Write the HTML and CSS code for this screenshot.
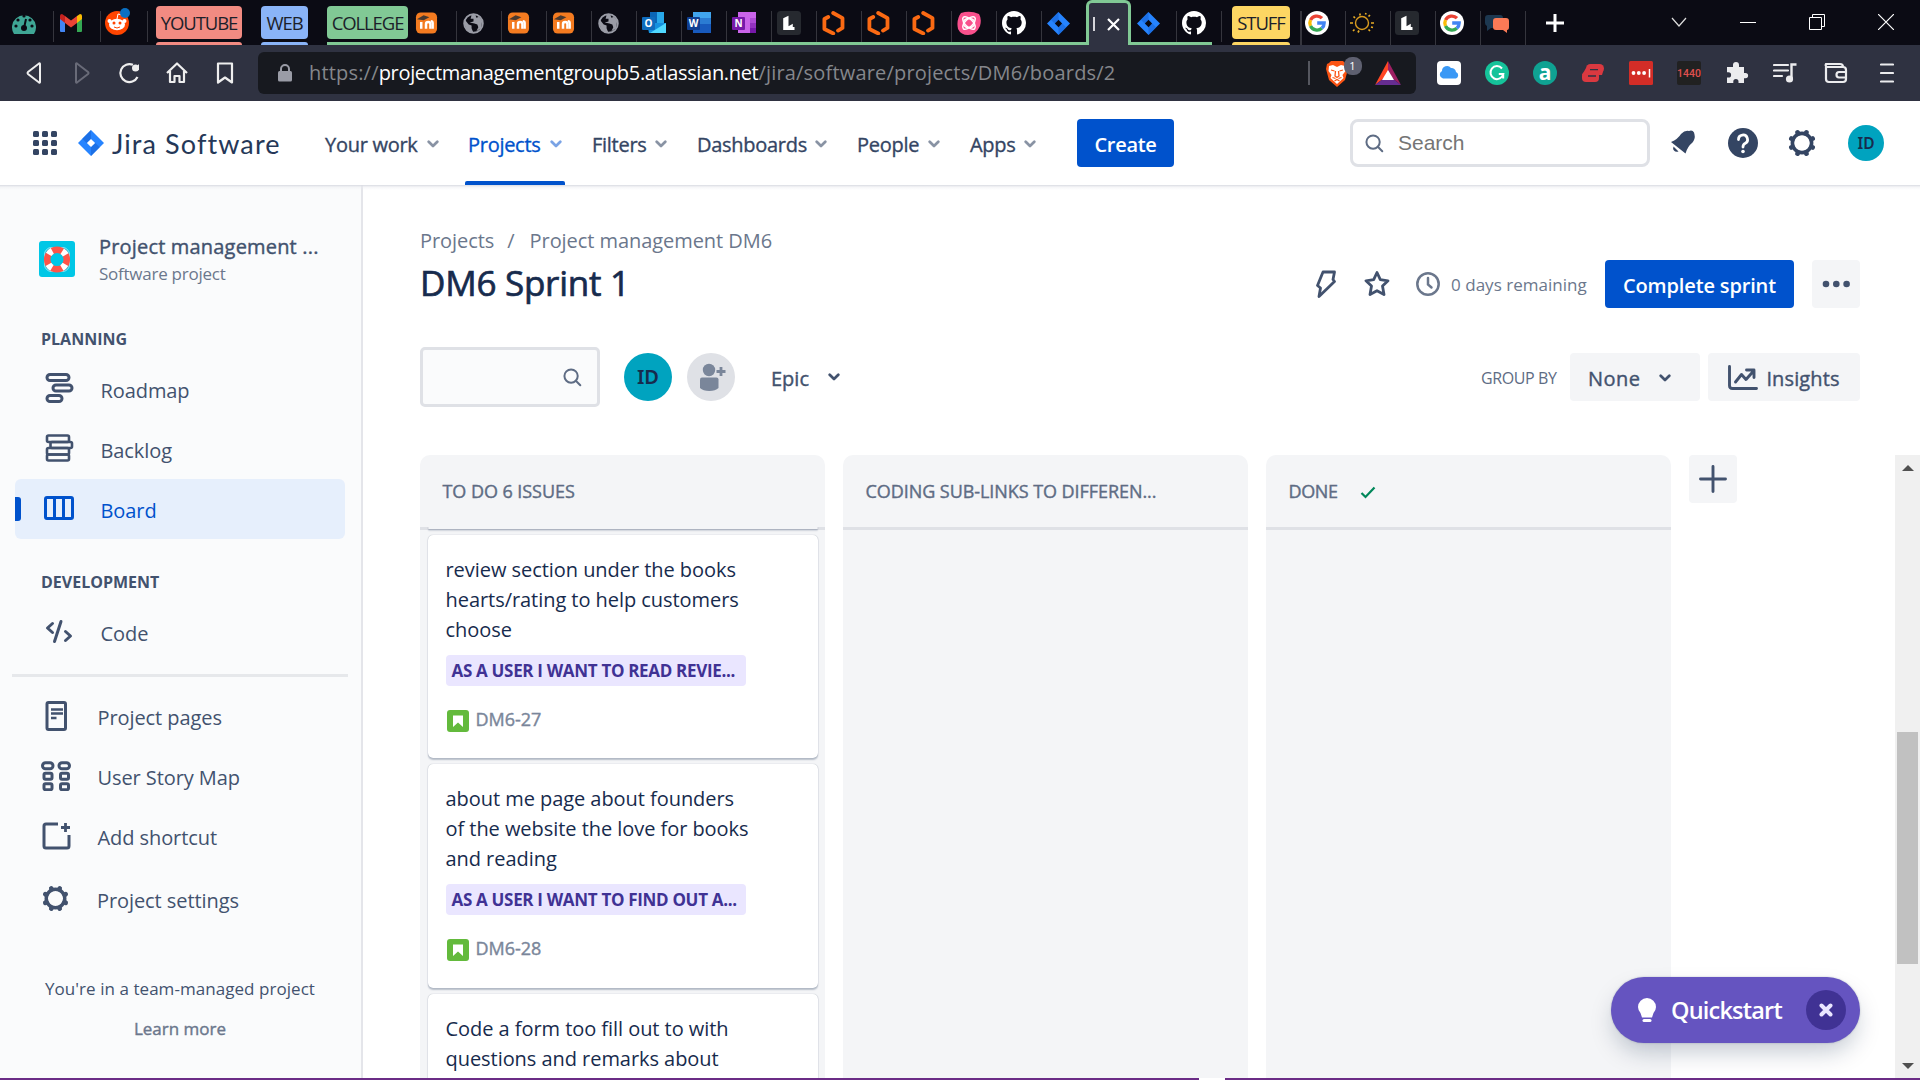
FILE: index.html
```html
<!DOCTYPE html>
<html lang="en">
<head>
<meta charset="utf-8">
<title>DM6 Sprint 1 - Jira Software</title>
<link rel="stylesheet" href="styles.css">
</head>
<body>
<svg class="defs" aria-hidden="true">
  <symbol id="moodle" viewBox="0 0 24 24"><rect x="1" y="1" width="22" height="22" rx="5" fill="#f47b20"/><path d="M6.500 18v-7M11.500 18v-5q0-2 2.300-2t2.300 2v5" stroke="#fff" stroke-width="2.600" fill="none"/><path d="M18.500 18v-6q0-2-2-2" stroke="#fff" stroke-width="2.400" fill="none"/><path d="M2 8l7-4 6 2-6 3z" fill="#4a3a30"/></symbol>
  <symbol id="globe" viewBox="0 0 24 24"><circle cx="12" cy="12" r="9.700" fill="none" stroke="#9a9ca6" stroke-width="2"/><path d="M3 8l4 5 3 1v3l2 5c-6 0-10-5-9-14zM10 3l-1 4 3 0 0 3-4 1 5 1 3 1 1 3 -2 4 5-3 1-8-3-4-3 1 -1-3z" fill="#9a9ca6"/></symbol>
  <symbol id="hex" viewBox="0 0 24 24"><path d="M6.200 6L2.400 8v10l8.900 4.500M11.200 2l9.300 5.200v9.700l-4.500 2.700" fill="none" stroke="#fb6a13" stroke-width="3.800" stroke-linecap="round" stroke-linejoin="round"/></symbol>
  <symbol id="ltab" viewBox="0 0 24 24"><rect width="24" height="24" rx="3.500" fill="#26292f"/><path d="M6.200 7.200l5.300-2.500v10.500l4.300-2.500v3.300h1.700v3H6.200z" fill="#fff"/></symbol>
  <symbol id="github" viewBox="0 0 16 16"><path fill="#fff" d="M8 0C3.580 0 0 3.580 0 8c0 3.540 2.290 6.530 5.470 7.590.4.070.55-.17.55-.38v-1.490c-2.010.37-2.530-.49-2.690-.94-.09-.23-.48-.94-.82-1.130-.28-.15-.68-.52-.01-.53.63-.01 1.080.58 1.230.82.72 1.210 1.870.87 2.330.66.07-.52.28-.87.51-1.070-1.780-.2-3.640-.89-3.640-3.950 0-.87.31-1.590.82-2.150-.08-.2-.36-1.020.08-2.120 0 0 .67-.21 2.200.82.64-.18 1.320-.27 2-.27s1.360.09 2 .27c1.530-1.040 2.200-.82 2.200-.82.44 1.100.16 1.920.08 2.120.51.56.82 1.270.82 2.150 0 3.070-1.870 3.750-3.650 3.950.29.25.54.73.54 1.480v2.200c0 .21.15.46.55.38A8 8 0 0 0 16 8c0-4.420-3.580-8-8-8z"/></symbol>
  <symbol id="jira" viewBox="0 0 24 24"><path d="M12 0l12 12-12 12L0 12z" fill="#2684ff"/><path d="M12 0v8.300L8 12 4 8z" fill="#1868db" opacity=".7"/><path d="M12 24v-8.300L16 12l4 4z" fill="#1868db" opacity=".7"/><path class="hole" d="M12 8.200l3.800 3.800-3.800 3.800L8.200 12z"/></symbol>
  <symbol id="google" viewBox="0 0 24 24"><circle cx="12" cy="12" r="12" fill="#fff"/><g fill="none" stroke-width="3.300"><path d="M17 7.200A7.200 7.200 0 0 0 5.500 9" stroke="#ea4335"/><path d="M5.500 9a7.200 7.200 0 0 0 0 6" stroke="#fbbc05"/><path d="M5.500 15a7.200 7.200 0 0 0 11.300 2.300" stroke="#34a853"/><path d="M16.800 17.300A7 7 0 0 0 19.200 12H12.200" stroke="#4285f4"/></g></symbol>
  <symbol id="chev" viewBox="0 0 12 8"><path d="M1.700 1.700L6 6l4.300-4.300" fill="none" stroke="currentColor" stroke-width="2.700" stroke-linecap="round" stroke-linejoin="round"/></symbol>
  <symbol id="gear" viewBox="0 0 28 28"><circle cx="14" cy="14" r="9.600" fill="none" stroke="currentColor" stroke-width="3.600"/><g stroke="currentColor" stroke-width="4.800" stroke-linecap="round"><path d="M10.100 4.600l-.5-1.200M17.900 4.600l.5-1.200M23.400 10.100l1.200-.5M23.400 17.900l1.200.5M17.900 23.400l.5 1.200M10.100 23.400l-.5 1.200M4.600 17.900l-1.200.5M4.600 10.100l-1.200-.5"/></g></symbol>
  <symbol id="mag" viewBox="0 0 20 20"><circle cx="8.500" cy="8.500" r="7" fill="none" stroke="currentColor" stroke-width="2.100"/><path d="M13.500 13.500l4.700 4.700" stroke="currentColor" stroke-width="2.100" stroke-linecap="round"/></symbol>
  <symbol id="story" viewBox="0 0 22 22"><rect width="22" height="22" rx="3" fill="#63ba3c"/><path d="M6 5.500h10V17l-5-4.500L6 17z" fill="#fff"/></symbol>
</svg>

<header class="tabs">
  <div class="tab t-first"><svg width="26" height="24" viewBox="0 0 26 24"><path d="M3 23A12 12 0 1 1 23 23z" fill="#3fa695"/><g fill="#0b0b14"><circle cx="5" cy="15" r="1.600"/><circle cx="7" cy="9" r="1.600"/><circle cx="13" cy="5" r="1.600"/><circle cx="19" cy="9" r="1.600"/><circle cx="21" cy="15" r="1.600"/><circle cx="13" cy="17" r="3"/></g><path d="M13 17l2-9" stroke="#0b0b14" stroke-width="2"/></svg></div>
  <div class="tab t-mail"><svg width="22" height="18" viewBox="0 0 22 18"><path d="M0 2v15q0 1 1 1h4V6z" fill="#4285f4"/><path d="M22 2v15q0 1-1 1h-4V6z" fill="#34a853"/><path d="M0 2q0-2 2-2l3 2v7L0 5z" fill="#c5221f"/><path d="M5 2l6 4.500L17 2v7l-6 4.500L5 9z" fill="#ea4335"/><path d="M22 2q0-2-2-2l-3 2v7l5-4z" fill="#fbbc04"/></svg></div>
  <div class="tab t-mail"><svg width="26" height="28" viewBox="0 0 26 28"><circle cx="12" cy="15" r="12" fill="#ff4500"/><ellipse cx="12" cy="16.500" rx="8" ry="5.800" fill="#fff"/><circle cx="4.500" cy="13" r="2" fill="#fff"/><circle cx="19.500" cy="13" r="2" fill="#fff"/><circle cx="9" cy="15" r="1.500" fill="#ff4500"/><circle cx="15" cy="15" r="1.500" fill="#ff4500"/><path d="M9 19q3 2 6 0" stroke="#ff4500" fill="none"/><path d="M12 11l1-5 4 1" stroke="#fff" fill="none"/><circle cx="20" cy="5" r="5" fill="#0a6fc2"/></svg></div>
  <div class="chip red"><span>YOUTUBE</span></div>
  <div class="chip blue"><span>WEB</span></div>
  <div class="group">
    <div class="chip green"><span>COLLEGE</span></div>
    <div class="tab"><svg width="23" height="24"><use href="#moodle"/></svg></div>
    <div class="tab"><svg width="23" height="23"><use href="#globe"/></svg></div>
    <div class="tab"><svg width="23" height="24"><use href="#moodle"/></svg></div>
    <div class="tab"><svg width="23" height="24"><use href="#moodle"/></svg></div>
    <div class="tab"><svg width="23" height="23"><use href="#globe"/></svg></div>
    <div class="tab"><svg width="24" height="24" viewBox="0 0 24 24"><path d="M8 1h14v12H8z" fill="#28a8ea"/><path d="M8 1h7v12H8z" fill="#0a66b7"/><path d="M5 12h19v10H7z" fill="#1490df"/><path d="M24 12v10H8z" fill="#50d9ff"/><rect y="6" width="13" height="13" rx="1" fill="#0f6cbd"/><text x="6.500" y="16" class="msl">O</text></svg></div>
    <div class="tab"><svg width="24" height="24" viewBox="0 0 24 24"><path d="M6 1h18v6H6z" fill="#41a5ee"/><path d="M6 7h18v6H6z" fill="#2b7cd3"/><path d="M6 13h18v9H6z" fill="#185abd"/><rect y="6" width="13" height="13" rx="1" fill="#103f91"/><text x="6.500" y="16" class="msl">W</text></svg></div>
    <div class="tab"><svg width="24" height="24" viewBox="0 0 24 24"><path d="M6 1h18v21H6z" fill="#ca64ea"/><path d="M18 7h6v5h-6z" fill="#ae4bd5"/><path d="M18 12h6v5h-6z" fill="#9332bf"/><path d="M18 17h6v5h-6z" fill="#7719aa"/><rect y="6" width="13" height="13" rx="1" fill="#7719aa"/><text x="6.500" y="16" class="msl">N</text></svg></div>
    <div class="tab"><svg width="24" height="24"><use href="#ltab"/></svg></div>
    <div class="tab"><svg width="24" height="24"><use href="#hex"/></svg></div>
    <div class="tab"><svg width="24" height="24"><use href="#hex"/></svg></div>
    <div class="tab"><svg width="24" height="24"><use href="#hex"/></svg></div>
    <div class="tab"><svg width="24" height="24" viewBox="0 0 24 24"><path d="M4 2Q13-1 22 3q3 5 1 12-4 9-12 9-7 0-10-6-2-9 3-16z" fill="#f9508c"/><g fill="none" stroke="#fff" stroke-width="1.500"><ellipse cx="12" cy="12" rx="8" ry="3.800" transform="rotate(45 12 12)"/><ellipse cx="12" cy="12" rx="8" ry="3.800" transform="rotate(-45 12 12)"/><rect x="6.500" y="7.500" width="11" height="9" rx="4.500"/></g></svg></div>
    <div class="tab"><svg width="24" height="24"><use href="#github"/></svg></div>
    <div class="tab nosep"><svg width="23" height="23" class="dark"><use href="#jira"/></svg></div>
    <div class="tab active"><i></i><svg width="13" height="13" viewBox="0 0 13 13"><path d="M1 1l11 11M12 1L1 12" stroke="#fff" stroke-width="2.200"/></svg></div>
    <div class="tab"><svg width="23" height="23" class="dark"><use href="#jira"/></svg></div>
    <div class="tab"><svg width="24" height="24"><use href="#github"/></svg></div>
  </div>
  <div class="chip yellow"><span>STUFF</span></div>
  <div class="rest">
    <div class="tab"><svg width="24" height="24"><use href="#google"/></svg></div>
    <div class="tab"><svg width="24" height="22" viewBox="0 0 24 22"><circle cx="12" cy="11" r="6.500" fill="none" stroke="#d99b1e" stroke-width="1.400"/><path d="M10 1.500v2M8 20.500l1-2M0 11h3M21 11h3M3.500 4.500L5 6M18.500 17.500L20 19M3 19l1.500-1.500M18.500 4.500L20 3M16 1l-.5 1.500M21 15l2 .5" stroke="#e7ac26" stroke-width="1.700"/></svg></div>
    <div class="tab"><svg width="24" height="24"><use href="#ltab"/></svg></div>
    <div class="tab"><svg width="24" height="24"><use href="#google"/></svg></div>
    <div class="tab"><svg width="24" height="19" viewBox="0 0 24 19"><path d="M3 1h12q3 0 3 3v7q0 3-3 3H6l-4 3V12Q0 11 0 9V4q0-3 3-3z" fill="#1d3850"/><path d="M11 4h10q3 0 3 3v6q0 3-2 3v3l-4-3h-7q-3 0-3-3V7q0-3 3-3z" fill="#fb7a56"/></svg></div>
  </div>
  <svg class="newtab" width="18" height="18" viewBox="0 0 18 18"><path d="M9 0v18M0 9h18" stroke="#fff" stroke-width="3"/></svg>
  <div class="winctl">
    <svg width="16" height="10" viewBox="0 0 16 10"><path d="M1 1l7 8 7-8" fill="none" stroke="#ddd" stroke-width="1.200"/></svg>
    <svg width="16" height="10" viewBox="0 0 16 10"><path d="M0 5.500h16" stroke="#fff"/></svg>
    <svg width="16" height="16" viewBox="0 0 16 16"><path d="M.5 3.500h12v12H.5zM3.500 3.500v-3h12v12h-3" fill="none" stroke="#fff"/></svg>
    <svg width="16" height="16" viewBox="0 0 16 16"><path d="M0 0l16 16M16 0L0 16" stroke="#fff" stroke-width="1.200"/></svg>
  </div>
</header>

<div class="toolbar">
  <div class="navbtns">
    <svg width="24" height="24" viewBox="0 0 24 24"><path d="M18 3v18q0 1-1 .5L6 13q-1-1 0-2L17 2.500q1-.5 1 .5z" fill="none" stroke="#eee" stroke-width="2"/></svg>
    <svg width="24" height="24" viewBox="0 0 24 24"><path d="M6 3v18q0 1 1 .5L18 13q1-1 0-2L7 2.500Q6 2 6 3z" fill="none" stroke="#696b78" stroke-width="2"/></svg>
    <svg width="24" height="24" viewBox="0 0 24 24"><path d="M20.500 16A9 9 0 1 1 16 3.800" fill="none" stroke="#eee" stroke-width="2.200"/><circle cx="18.500" cy="7" r="3.500" fill="#eee"/><path d="M16 9h6V3z" fill="#eee"/></svg>
    <svg width="24" height="24" viewBox="0 0 24 24"><path d="M2 12L12 2.500 22 12M5 10v11h4.500v-6h5v6H19V10" fill="none" stroke="#eee" stroke-width="2.200" stroke-linejoin="round"/></svg>
    <svg width="24" height="24" viewBox="0 0 24 24"><path d="M5 2.500h14v19l-7-5-7 5z" fill="none" stroke="#eee" stroke-width="2.200" stroke-linejoin="round"/></svg>
  </div>
  <div class="url">
    <svg width="14" height="18" viewBox="0 0 14 18"><rect y="7" width="14" height="10.500" rx="1.500" fill="#9a9ca6"/><path d="M3 8V5a4 4 0 0 1 8 0v3" fill="none" stroke="#9a9ca6" stroke-width="2"/></svg>
    <p class="addr"><span>https://</span><b>projectmanagementgroupb5.atlassian.net</b><span>/jira/software/projects/DM6/boards/2</span></p>
    <i class="vbar"></i>
    <div class="brave"><svg width="22" height="27" viewBox="0 0 22 27"><path d="M5 1h12l2 2 2 1 1 5-3 11-8 7-8-7L0 9l1-5 2-1z" fill="#fb5414"/><path d="M3 6l4-1 4 2 4-2 4 1 .5 5-3 4 1 3-6.500 6-6.500-6 1-3-3-4z" fill="#fff"/><path d="M5 10l3.500 1M17 10l-3.500 1M9.500 11l-.5 5 2 1.500 2-1.500-.5-5M6.500 17.500l3 1M15.500 17.500l-3 1M8.500 21l2.500-1.500 2.500 1.500" fill="none" stroke="#fb5414" stroke-width="1.300"/></svg><em>1</em></div>
    <svg width="26" height="24" viewBox="0 0 26 24"><path d="M13 0L0 24l13-10z" fill="#ff4724"/><path d="M13 0l13 24-13-10z" fill="#9e1f63"/><path d="M0 24h26L13 14z" fill="#662d91"/><path d="M13 9l6 10H7z" fill="#fff"/></svg>
  </div>
  <div class="exts">
    <svg width="24" height="24" viewBox="0 0 24 24"><rect width="24" height="24" rx="4" fill="#fff"/><path d="M6 17.500a4 4 0 0 1-1-7.500 5 5 0 0 1 9-3 4.500 4.500 0 0 1 5 4 3.500 3.500 0 0 1 0 6.500z" fill="#3a98f5"/></svg>
    <svg width="24" height="24" viewBox="0 0 24 24"><circle cx="12" cy="12" r="12" fill="#15c39a"/><path d="M17 7.500a6.500 6.500 0 1 0 1.300 5.500h-4.500M18.200 12.500v5" fill="none" stroke="#fff" stroke-width="2"/></svg>
    <svg width="24" height="24" viewBox="0 0 24 24"><circle cx="12" cy="12" r="12" fill="#0fa292"/><text x="12" y="18.500" class="exta">a</text></svg>
    <svg width="24" height="20" viewBox="0 0 24 20"><rect x="5" y="1" width="18" height="9" rx="4.500" fill="#da3940"/><path d="M5 5L1 12h20q2-4 1-7z" fill="#da3940"/><rect x="1" y="9" width="17" height="10" rx="4" fill="#da3940"/><path d="M9 6.700h8M7 13h8" stroke="#2f3241" stroke-width="1.300"/></svg>
    <svg width="24" height="24" viewBox="0 0 24 24"><rect width="24" height="24" rx="1.500" fill="#d32d27"/><circle cx="4.500" cy="12" r="1.900" fill="#fff"/><circle cx="9.800" cy="12" r="1.900" fill="#fff"/><circle cx="15.100" cy="12" r="1.900" fill="#fff"/><path d="M20.500 8v8.500" stroke="#fff" stroke-width="1.500"/></svg>
    <svg width="24" height="24" viewBox="0 0 24 24"><rect width="24" height="24" rx="2" fill="#212121"/><text x="12" y="15.500" class="ext14">1440</text></svg>
    <svg width="24" height="24" viewBox="0 0 24 24"><path d="M2 6h6V4a3 3 0 0 1 6 0v2h5v6h1.500a2.600 2.600 0 0 1 0 5.200H19V22h-5.500v-1.500a2.600 2.600 0 0 0-5.200 0V22H2v-5.500h1.500a2.600 2.600 0 0 0 0-5.200H2z" fill="#ececee"/></svg>
    <svg width="24" height="24" viewBox="0 0 24 24"><path d="M1 4h14M1 9.500h14M1 15h8" stroke="#ececee" stroke-width="2.200" stroke-linecap="round"/><path d="M18.500 18V3.500h5" fill="none" stroke="#ececee" stroke-width="2.400"/><circle cx="16.500" cy="18" r="3.600" fill="#ececee"/></svg>
    <svg width="24" height="24" viewBox="0 0 24 24"><path d="M2 6V18q0 3 3 3h14q3 0 3-3V9q0-3-3-3H3q-2-1-1-3h14q3 0 3 3M22 11h-7q-2.500 0-2.500 2.700T15 16.500h7" fill="none" stroke="#ececee" stroke-width="2.200"/></svg>
    <svg width="14" height="20" viewBox="0 0 14 20"><path d="M1 1.500h12M1 10h12M1 18.500h12" stroke="#ececee" stroke-width="2.200" stroke-linecap="round"/></svg>
  </div>
</div>

<nav class="jnav">
  <svg class="apps" width="24" height="24" viewBox="0 0 24 24" fill="#344563"><rect width="6" height="6" rx="1.500"/><rect x="9" width="6" height="6" rx="1.500"/><rect x="18" width="6" height="6" rx="1.500"/><rect y="9" width="6" height="6" rx="1.500"/><rect x="9" y="9" width="6" height="6" rx="1.500"/><rect x="18" y="9" width="6" height="6" rx="1.500"/><rect y="18" width="6" height="6" rx="1.500"/><rect x="9" y="18" width="6" height="6" rx="1.500"/><rect x="18" y="18" width="6" height="6" rx="1.500"/></svg>
  <div class="brand"><svg width="26" height="26" class="light"><use href="#jira"/></svg><span>Jira Software</span></div>
  <ul class="menu">
    <li class="w1">Your work<svg width="12" height="8"><use href="#chev"/></svg></li>
    <li class="w2 on">Projects<svg width="12" height="8"><use href="#chev"/></svg></li>
    <li class="w3">Filters<svg width="12" height="8"><use href="#chev"/></svg></li>
    <li class="w4">Dashboards<svg width="12" height="8"><use href="#chev"/></svg></li>
    <li class="w5">People<svg width="12" height="8"><use href="#chev"/></svg></li>
    <li class="w6">Apps<svg width="12" height="8"><use href="#chev"/></svg></li>
  </ul>
  <button class="btn create">Create</button>
  <div class="right">
    <div class="search"><svg width="19" height="19"><use href="#mag"/></svg><span>Search</span></div>
    <svg class="bell" width="26" height="26" viewBox="0 0 26 26"><path d="M1 12Q8 9 11 4q4-4 8-3l2-.5q2 0 3 2l.5 2q1 4-2 8-5 4-7 11z" fill="#344563"/><path d="M3.500 16.500l5 5q-3 1-4.500-1t-.5-4z" fill="#344563"/></svg>
    <svg class="help" width="30" height="30" viewBox="0 0 30 30"><circle cx="15" cy="15" r="15" fill="#344563"/><path d="M10.500 11.500a4.500 4.500 0 1 1 6.500 4q-2 1-2 3.500" fill="none" stroke="#fff" stroke-width="2.800" stroke-linecap="round"/><circle cx="15" cy="23.500" r="1.800" fill="#fff"/></svg>
    <svg class="cog" width="28" height="28"><use href="#gear"/></svg>
    <span class="avatar small">ID</span>
  </div>
</nav>

<div class="page">
  <aside class="side">
    <div class="proj">
      <svg width="36" height="36" viewBox="0 0 36 36"><rect width="36" height="36" rx="3" fill="#00c7e6"/><rect x="5.500" y="6.500" width="25" height="24" rx="7" fill="none" stroke="#ffffff90" stroke-width="1"/><circle cx="18" cy="18.500" r="9.800" fill="none" stroke="#ff5549" stroke-width="6.500"/><circle cx="18" cy="18.500" r="9.800" fill="none" stroke="#fff" stroke-width="6.500" stroke-dasharray="5 10.394" stroke-dashoffset="-5.200"/></svg>
      <div><h2>Project management ...</h2><p>Software project</p></div>
    </div>
    <h3 class="plan">PLANNING</h3>
    <ul class="items">
      <li><svg width="30" height="30" viewBox="0 0 30 30" fill="none" stroke="#42526e" stroke-width="3"><rect x="3" y="1.500" width="22" height="6" rx="3"/><rect x="9" y="12" width="19" height="6" rx="3"/><rect x="3" y="22.500" width="15" height="6" rx="3"/></svg><span>Roadmap</span></li>
      <li><svg width="30" height="30" viewBox="0 0 30 30" fill="none" stroke="#42526e" stroke-width="2.600"><rect x="3" y="2.500" width="22" height="6.500" rx="1.500"/><rect x="6.500" y="9" width="21.500" height="6" rx="1.500"/><rect x="3" y="15" width="22" height="6.500" rx="1.500"/><rect x="3" y="21.500" width="22" height="6" rx="1.500"/></svg><span>Backlog</span></li>
      <li class="sel"><svg width="30" height="30" viewBox="0 0 30 30" fill="none" stroke="#0052cc" stroke-width="3"><rect x="1.500" y="4.500" width="27" height="21" rx="1.500"/><path d="M10.500 4v22M19.500 4v22"/></svg><span>Board</span></li>
    </ul>
    <h3 class="dev">DEVELOPMENT</h3>
    <ul class="items">
      <li><svg width="30" height="30" viewBox="0 0 30 30" fill="none" stroke="#42526e" stroke-width="3" stroke-linecap="round" stroke-linejoin="round"><path d="M8.500 6.500L3.500 11l5 4.500M17 4.500l-6.500 20M21.500 14.500l5 4.500-5 4.500"/></svg><span>Code</span></li>
    </ul>
    <hr>
    <ul class="items lower">
      <li><svg width="30" height="30" viewBox="0 0 30 30" fill="none" stroke="#42526e" stroke-width="3"><rect x="6" y="1.500" width="18.500" height="27" rx="1.500"/><path d="M10 8.500h12M10 12.500h12M10 17h5.500" stroke-width="2.500"/></svg><span>Project pages</span></li>
      <li><svg width="30" height="30" viewBox="0 0 30 30" fill="none" stroke="#42526e" stroke-width="3"><rect x="1.500" y="1.700" width="10.500" height="6" rx="3"/><rect x="18" y="1.700" width="10.500" height="6" rx="3"/><rect x="3" y="12.200" width="8" height="6" rx="1.500"/><rect x="19.500" y="12.200" width="8" height="6" rx="1.500"/><rect x="3" y="22.700" width="8" height="6" rx="1.500"/><rect x="19.500" y="22.700" width="8" height="6" rx="1.500"/></svg><span>User Story Map</span></li>
      <li><svg width="30" height="30" viewBox="0 0 30 30" fill="none" stroke="#42526e" stroke-width="3"><path d="M17 3H5Q3 3 3 5v20q0 2 2 2h21q2 0 2-2V14"/><path d="M24.500 2v9M20 6.500h9" stroke-width="2.800"/></svg><span>Add shortcut</span></li>
      <li class="set"><svg width="27" height="27" class="gearside"><use href="#gear"/></svg><span>Project settings</span></li>
    </ul>
    <p class="foot">You're in a team-managed project</p>
    <p class="learn">Learn more</p>
  </aside>

  <main class="main">
    <p class="crumbs"><span>Projects</span><i>/</i><span class="c2">Project management DM6</span></p>
    <div class="titlebar">
      <h1>DM6 Sprint 1</h1>
      <div class="acts">
        <svg class="bolt" width="22" height="28" viewBox="0 0 22 28"><path d="M8 2h11.500L18 9.500l1.500 2L4 26.500 5.500 18l-3-2.500z" fill="none" stroke="#42526e" stroke-width="2.800" stroke-linejoin="round"/></svg>
        <svg class="star" width="26" height="26" viewBox="0 0 26 26"><path d="M13 1.500l3.300 7.100 7.700 1.200-5.500 5.300 1.500 8.400-7-3.800-7 3.800 1.500-8.400L2 9.800l7.700-1.200z" fill="none" stroke="#42526e" stroke-width="2.800" stroke-linejoin="round"/></svg>
        <svg class="clock" width="24" height="24" viewBox="0 0 24 24"><circle cx="12" cy="12" r="10.700" fill="none" stroke="#6b778c" stroke-width="2.500"/><path d="M12 6v6.500l3.500 3" fill="none" stroke="#6b778c" stroke-width="2.500" stroke-linecap="round"/></svg>
        <span class="days">0 days remaining</span>
        <button class="btn complete">Complete sprint</button>
        <button class="btn grey more"><svg width="28" height="8" viewBox="0 0 28 8" fill="#42526e"><circle cx="4" cy="4" r="3.300"/><circle cx="14.300" cy="4" r="3.300"/><circle cx="24.600" cy="4" r="3.300"/></svg></button>
      </div>
    </div>
    <div class="filters">
      <div class="box"><svg width="19" height="19"><use href="#mag"/></svg></div>
      <span class="avatar">ID</span>
      <span class="addp"><svg width="28" height="30" viewBox="0 0 28 30" fill="#7a869a"><circle cx="11" cy="8" r="6.200"/><path d="M2 17.500Q2 15.500 4 15.500h14.500q2 0 2 2V26q-3 3-9.200 3T2 26z"/><path d="M23 5v9M18.500 9.500h9" stroke="#7a869a" stroke-width="2.800"/></svg></span>
      <span class="epic">Epic</span><svg class="dk" width="12" height="8"><use href="#chev"/></svg>
      <div class="grp">
        <span class="by">GROUP BY</span>
        <button class="btn grey none"><span>None</span><svg width="12" height="8"><use href="#chev"/></svg></button>
        <button class="btn grey ins"><svg width="30" height="26" viewBox="0 0 30 26" fill="none" stroke="#42526e" stroke-width="2.900" stroke-linecap="round" stroke-linejoin="round"><path d="M1.500 1.500v19q0 3 3 3H28.500"/><path d="M7.500 17l6-7.500 4.500 5 8-9M18.500 5h7.500v7.500"/></svg><span>Insights</span></button>
      </div>
    </div>
    <div class="boardrow">
      <section class="col">
        <h4>TO DO 6 ISSUES</h4>
        <div class="cards">
          <div class="card prev"></div>
          <article class="card"><p>review section under the books<br>hearts/rating to help customers<br>choose</p><span class="label">AS A USER I WANT TO READ REVIE...</span><div class="key"><svg width="22" height="22"><use href="#story"/></svg><span>DM6-27</span></div></article>
          <article class="card second"><p>about me page about founders<br>of the website the love for books<br>and reading</p><span class="label">AS A USER I WANT TO FIND OUT A...</span><div class="key"><svg width="22" height="22"><use href="#story"/></svg><span>DM6-28</span></div></article>
          <article class="card"><p>Code a form too fill out to with<br>questions and remarks about</p></article>
        </div>
      </section>
      <section class="col"><h4>CODING SUB-LINKS TO DIFFEREN...</h4></section>
      <section class="col"><h4 class="c-c">DONE<svg width="16" height="13" viewBox="0 0 16 13"><path d="M1.500 7l4 4L14.500 1.500" fill="none" stroke="#00875a" stroke-width="2.200"/></svg></h4></section>
      <button class="btn grey plus"><svg width="28" height="28" viewBox="0 0 28 28"><path d="M14 1.500v25M1.500 14h25" stroke="#42526e" stroke-width="2.900" stroke-linecap="round"/></svg></button>
      <div class="scroll"><i class="up"></i><i class="thumb"></i><i class="down"></i></div>
    </div>
  </main>
</div>
<div class="quick">
  <svg width="18" height="24" viewBox="0 0 18 24" fill="#fff"><path d="M9 0a9 9 0 0 1 9 9q0 3-2.500 6L14 19.500H4L2.500 15Q0 12 0 9a9 9 0 0 1 9-9z"/><rect x="4.500" y="21" width="9" height="3" rx="1.500"/></svg>
  <span>Quickstart</span>
  <i><svg width="14" height="14" viewBox="0 0 14 14"><path d="M2.500 2.500l9 9M11.500 2.500l-9 9" stroke="#eae6ff" stroke-width="4" stroke-linecap="round"/></svg></i>
</div>
<footer class="edge"><i></i></footer>
</body>
</html>
```
FILE: styles.css
```css
* { box-sizing: border-box; margin: 0; padding: 0; }
body { width: 1920px; height: 1080px; overflow: hidden; position: relative; background: #fff; color: #42526e; font-family: "Open Sans", "Noto Sans", sans-serif; font-size: 20px; display: flex; flex-direction: column; }
svg { display: block; flex: none; }
ul { list-style: none; }
i, em { font-style: normal; }
.defs { position: absolute; width: 0; height: 0; }
button { font: inherit; border: 0; }

/* browser tab strip */
.tabs { height: 45px; flex: none; background: #0b0b14; display: flex; }
.tab { width: 45px; height: 45px; flex: none; display: flex; align-items: center; padding-left: 6px; justify-content: flex-start; position: relative; padding-top: 1px; }
.tab::after { content: ""; position: absolute; right: -1px; top: 11px; width: 1.500px; height: 31px; background: #35353d; }
.tab.nosep::after, .tab.active::after { display: none; }
.t-first { width: 53px; padding-left: 11px; }
.t-mail { width: 47px; padding-left: 7px; }
.t-mail + .t-mail { padding-left: 5px; padding-bottom: 2px; }
.chip { height: 45px; padding-top: 6px; position: relative; flex: none; }
.chip span { display: flex; align-items: center; justify-content: center; height: 33px; border-radius: 4px; color: #1c1f2a; font-size: 18.500px; letter-spacing: -1.100px; padding-bottom: 1px; white-space: nowrap; }
.chip::after { content: ""; position: absolute; left: 0; right: 0; bottom: 0; height: 3px; border-radius: 3px 3px 0 0; }
.red { width: 86px; margin-left: 9px; } .red span, .red::after { background: #f28b82; }
.blue { width: 47px; margin-left: 19px; } .blue span, .blue::after { background: #8ab4f8; }
.group { display: flex; margin-left: 19px; width: 895px; height: 45px; position: relative; background: linear-gradient(#81c995, #81c995) 0 42px / 885px 3px no-repeat; }
.green { width: 81px; margin-right: 3px; } .green span { background: #81c995; }
.green + .tab { padding-left: 4px; }
.yellow { width: 58px; margin-left: 10px; } .yellow span, .yellow::after { background: #fdd663; }
.rest { display: flex; margin-left: 10px; position: relative; }
.rest::before { content: ""; position: absolute; left: 0; top: 11px; width: 1.500px; height: 34px; background: #35353d; }
.rest .tab::after { height: 34px; }
.tab.active { background: #2f3241; border: 3px solid #81c995; border-bottom: 0; border-radius: 6px 6px 0 0; padding-left: 4px; gap: 12px; padding-top: 0; }
.active i { width: 2px; height: 14px; background: #d5d5da; }
.dark { fill: #0b0b14; } .light { fill: #fff; }
.rest .tab { padding-left: 5px; }
.msl { font: 700 10px "Open Sans", sans-serif; fill: #fff; text-anchor: middle; }
.newtab { margin: 14px 0 0 21px; }
.winctl { display: flex; align-items: center; gap: 53px; margin-left: 107px; height: 43px; }

/* browser toolbar */
.toolbar { height: 56px; flex: none; background: #2f3241; display: flex; align-items: center; }
.navbtns { display: flex; gap: 23.700px; padding-left: 22px; width: 258px; }
.url { width: 1158px; height: 42px; border-radius: 6px; background: #17191f; display: flex; align-items: center; padding-left: 20px; }
.addr { margin-left: 17px; width: 989px; font-size: 20px; color: #85878c; white-space: nowrap; padding-bottom: 1px; }
.addr b { font-weight: 400; color: #fff; letter-spacing: -.32px; }
.addr span { letter-spacing: .18px; }
.vbar { width: 1.500px; height: 24px; background: #55575f; margin-left: 10px; }
.brave { position: relative; margin: 0 27px 0 16px; }
.brave em { position: absolute; left: 18px; top: -3px; width: 18px; height: 18px; border-radius: 8px; background: #5e6070; color: #fff; font-size: 11px; line-height: 18px; text-align: center; }
.exts { display: flex; align-items: center; gap: 24px; padding-left: 21px; }
.exts svg:nth-last-child(2) { margin-left: 3px; }
.exts svg:last-child { margin-left: 8px; }
.exta { font: 700 21px "Open Sans", sans-serif; fill: #fff; text-anchor: middle; }
.ext14 { font: 500 10.500px Roboto, sans-serif; fill: #e0504f; text-anchor: middle; }

/* product navigation */
.jnav { height: 84px; flex: none; display: flex; align-items: center; padding-left: 33px; color: #344563; position: relative; z-index: 2; }
.jnav::after { content: ""; position: absolute; left: 0; right: 0; top: 84px; height: 5px; background: linear-gradient(#d9dbe2, #ebecf080 40%, #ebecf000); }
.brand { display: flex; align-items: center; gap: 8px; margin-left: 21px; width: 247px; color: #253858; }
.brand span { font: 27px Lato, sans-serif; letter-spacing: 1.100px; white-space: nowrap; }
.menu { display: flex; height: 84px; color: #344563; -webkit-text-stroke: .35px; }
.menu li { display: flex; align-items: center; justify-content: space-between; padding-top: 2px; white-space: nowrap; letter-spacing: -.28px; }
.menu svg { color: #8993a4; }
.w1 { width: 114px; }
.menu .w2 { width: 100px; margin-left: 26px; padding: 2px 3px 0; position: relative; }
.w3 { width: 75px; margin-left: 27px; } .w4 { width: 130px; margin-left: 30px; } .w5 { width: 83px; margin-left: 30px; } .w6 { width: 66px; margin-left: 30px; }
.menu .on { color: #0052cc; } .menu .on svg { color: #7aa3e5; }
.on::after { content: ""; position: absolute; left: 0; right: 0; bottom: 0; height: 4px; background: #0052cc; border-radius: 2px 2px 0 0; }
.btn { height: 48px; border-radius: 4px; display: flex; align-items: center; justify-content: center; background: #0052cc; color: #fff; font-weight: 600; letter-spacing: -.2px; white-space: nowrap; }
.create { width: 97px; margin-left: 41px; padding-top: 2px; letter-spacing: -.3px; }
.right { display: flex; align-items: center; margin-left: 176px; }
.search { width: 300px; height: 48px; border: 3px solid #dfe1e6; border-radius: 8px; display: flex; align-items: center; padding-left: 12px; gap: 14px; color: #5e6c84; }
.search span { font: 21px "Liberation Sans", sans-serif; color: #757575; }
.bell { margin-left: 20px; } .help { margin-left: 32px; } .cog { margin-left: 30px; color: #344563; } .small { margin-left: 32px; }
.avatar { width: 48px; height: 48px; border-radius: 50%; background: #00a3bf; color: #172b4d; font-weight: 600; font-family: "Noto Sans", sans-serif; font-size: 20px; display: flex; align-items: center; justify-content: center; padding-bottom: 1px; }
.avatar.small { width: 36px; height: 36px; font-size: 15.500px; }

.page { height: 893px; flex: none; display: flex; }
/* sidebar */
.side { width: 363px; flex: none; background: #fafbfc; border-right: 2px solid #e4e5ea; }
.proj { display: flex; align-items: center; height: 36px; margin: 56px 0 0 39px; gap: 24px; }
.proj h2 { font-size: 20px; font-weight: 400; -webkit-text-stroke: .4px; line-height: 27px; letter-spacing: .18px; white-space: nowrap; }
.proj p { font-size: 17px; line-height: 25px; color: #6b778c; letter-spacing: -.25px; padding-top: 1px; }
.side h3 { font-size: 16px; font-weight: 700; letter-spacing: 0; line-height: 20px; padding-left: 41px; }
.plan { margin-top: 52px; } .dev { margin-top: 33px; }
.items { padding: 0 16px 0 15px; }
.plan + .items { padding-top: 10px; }
.items li { height: 60px; display: flex; align-items: center; gap: 26.500px; padding-left: 29px; border-radius: 6px; position: relative; letter-spacing: -.08px; }
.items li svg { margin-bottom: 3px; }
.plan + .items span { padding-top: 2px; }
.plan + .items svg { margin-bottom: 2px; }
.items .sel { background: #e6effc; color: #0052cc; }
.sel::before { content: ""; position: absolute; left: 0; top: 18px; width: 6px; height: 24px; background: #0052cc; border-radius: 0 3px 3px 0; }
.dev + .items { padding-top: 11px; }
.side hr { border: 0; height: 3px; background: #e6e8eb; margin: 11px 13px 0 12px; }
.items.lower { padding-top: 10px; }
.lower li { padding-left: 26px; }
.lower li.set { margin-top: 3px; gap: 28px; padding-left: 27px; }
.gearside { color: #42526e; }
.foot { margin-top: 46px; font-size: 17px; line-height: 26px; text-align: center; letter-spacing: .05px; padding-right: 1px; white-space: nowrap; }
.learn { margin-top: 14px; font-size: 17px; line-height: 26px; text-align: center; -webkit-text-stroke: .4px; color: #6b778c; padding-right: 1px; }

/* board area */
.main { flex: 1; padding-left: 57px; display: flex; flex-direction: column; min-width: 0; }
.crumbs { display: flex; margin-top: 41px; height: 30px; line-height: 30px; color: #6b778c; letter-spacing: -.06px; }
.crumbs i { margin: 0 15px 0 13px; }
.titlebar { height: 48px; display: flex; align-items: center; margin-top: 4px; padding-right: 60px; justify-content: space-between; }
.titlebar h1 { font-size: 35px; font-weight: 400; -webkit-text-stroke: .7px; color: #172b4d; letter-spacing: -.25px; line-height: 46px; padding-bottom: 3px; white-space: nowrap; }
.acts { display: flex; align-items: center; }
.star { margin-left: 27px; } .clock { margin-left: 26px; }
.days { margin-left: 11px; width: 136px; font-size: 17px; color: #6b778c; white-space: nowrap; letter-spacing: .03px; }
.complete { width: 189px; margin-left: 18px; padding-top: 2px; letter-spacing: -.15px; }
.grey { background: #f4f5f7; color: #42526e; font-weight: 400; -webkit-text-stroke: .4px; }
.more { width: 48px; margin-left: 18px; }
.filters { height: 60px; margin-top: 39px; display: flex; align-items: center; padding-right: 60px; }
.box { width: 180px; height: 60px; border: 3px solid #dfe1e6; border-radius: 5px; background: #fafbfc; display: flex; align-items: center; justify-content: flex-end; padding-right: 15px; color: #5e6c84; }
.filters .avatar { margin-left: 24px; }
.addp { width: 48px; height: 48px; border-radius: 50%; background: #dfe1e6; margin-left: 15px; display: flex; align-items: center; justify-content: center; padding-left: 2px; }
.epic { margin-left: 36px; width: 57px; -webkit-text-stroke: .4px; padding-top: 2px; }
.dk { color: #42526e; }
.grp { margin-left: auto; display: flex; align-items: center; }
.by { font-size: 16px; color: #5e6c84; width: 89px; letter-spacing: -.4px; white-space: nowrap; padding-top: 1px; }
.none { width: 130px; gap: 17px; justify-content: flex-start; padding: 2px 0 0 18px; letter-spacing: .45px; }
.none svg { margin-left: 2px; }
.ins { width: 152px; margin-left: 8px; gap: 8px; padding-top: 2px; letter-spacing: .12px; }
.boardrow { display: flex; gap: 18px; margin-top: 48px; height: 623px; align-items: flex-start; }
.col { width: 405px; height: 623px; background: #f4f5f7; border-radius: 10px 10px 0 0; flex: none; }
.col h4 { height: 75px; border-bottom: 3px solid #dfe1e6; padding-left: 22.500px; font-size: 18px; font-weight: 400; -webkit-text-stroke: .4px; color: #5e6c84; display: flex; align-items: center; white-space: nowrap; letter-spacing: -.06px; padding-bottom: 1px; }
.c-c svg { margin: 3px 0 0 22px; }
.col .c-c { letter-spacing: -.4px; }
.cards { height: 551px; margin-top: -3px; padding: 0 7px 0 8px; overflow: hidden; display: flex; flex-direction: column; gap: 6px; position: relative; }
.card { flex: none; height: 223px; background: #fff; border-radius: 5px; box-shadow: 0 1.500px 1.500px #091e4240, 0 0 1px #091e424f; padding: 20px 0 0 17.500px; color: #172b4d; }
.card.prev { height: 2px; background: #f4f5f7; padding: 0; }
.card.second { height: 224px; padding-top: 19.500px; }
.card p { line-height: 30px; white-space: nowrap; letter-spacing: -.05px; }
.label { display: block; width: 300px; height: 31px; line-height: 32px; margin-top: 10px; background: #eae6ff; border-radius: 4px; color: #403294; font-size: 17px; font-weight: 700; padding-left: 6px; white-space: nowrap; letter-spacing: -.32px; }
.key { display: flex; align-items: center; gap: 7px; margin: 20px 0 0 1px; font-size: 18px; -webkit-text-stroke: .4px; letter-spacing: -.05px; color: #7a869a; height: 26px; }
.key svg { margin-top: 4px; }
.plus { width: 48px; flex: none; }
.scroll { margin-left: auto; width: 25px; height: 623px; background: #f0f0f0; position: relative; }
.scroll i { position: absolute; }
.up { left: 7px; top: 10px; border: 6px solid transparent; border-top: 0; border-bottom: 6px solid #505050; }
.thumb { left: 2px; right: 2px; top: 277px; height: 232px; background: #c1c1c1; }
.down { left: 7px; bottom: 9px; border: 6px solid transparent; border-bottom: 0; border-top: 6px solid #505050; }
.quick { position: absolute; left: 1611px; top: 977px; width: 249px; height: 66px; border-radius: 33px; background: #6554c0; color: #fff; display: flex; align-items: center; padding-left: 27px; box-shadow: 0 12px 24px -4px #091e4240, 0 0 2px #091e4240; font-size: 23.500px; font-weight: 600; }
.quick span { margin-left: 15px; width: 135px; letter-spacing: -.8px; }
.quick i { width: 40px; height: 40px; border-radius: 50%; background: #403294; display: flex; align-items: center; justify-content: center; }
.edge { height: 2px; flex: none; background: #6b2c86; }
.edge i { display: block; width: 26px; height: 2px; margin-left: 1199px; background: #fff; }
```
